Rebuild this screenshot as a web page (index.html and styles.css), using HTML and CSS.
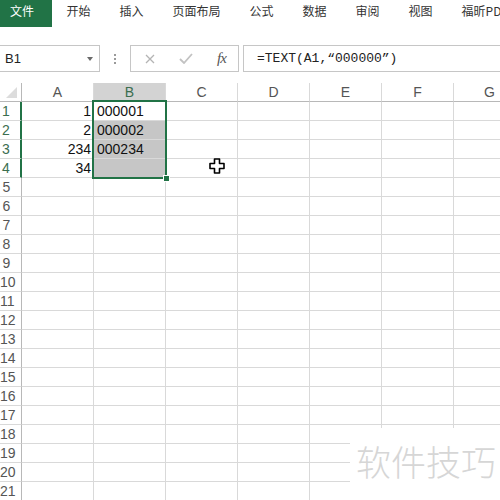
FILE: index.html
```html
<!DOCTYPE html>
<html lang="zh-CN">
<head>
<meta charset="utf-8">
<title>Excel TEXT</title>
<link rel="stylesheet" href="styles.css">
</head>
<body>
<nav class="tabs">
  <span class="tab tab-file">文件</span>
  <span class="tab">开始</span>
  <span class="tab">插入</span>
  <span class="tab">页面布局</span>
  <span class="tab">公式</span>
  <span class="tab">数据</span>
  <span class="tab">审阅</span>
  <span class="tab">视图</span>
  <span class="tab">福昕PDF</span>
</nav>

<div class="fbar">
  <div class="namebox"><span>B1</span><span class="caret"></span></div>
  <div class="dots"><i></i><i></i><i></i></div>
  <div class="fbtns">
    <svg class="ico" width="10" height="10" viewBox="0 0 10 10"><path d="M1 1L9 9M9 1L1 9" stroke="#b4b4b4" stroke-width="1.3" fill="none"/></svg>
    <svg class="ico" width="14" height="11" viewBox="0 0 14 11"><path d="M1 6L5 10L13 1" stroke="#c2c2c2" stroke-width="1.8" fill="none"/></svg>
    <span class="fx">fx</span>
  </div>
  <div class="formula">=TEXT(A1,“000000”)</div>
</div>

<div class="sheet">
  <div class="hrow">
    <div class="corner"><svg width="11" height="11" viewBox="0 0 11 11"><path d="M11 0V11H0Z" fill="#dcdcdc"/></svg></div>
    <div class="ch">A</div><div class="ch ch-sel">B</div><div class="ch">C</div><div class="ch">D</div><div class="ch">E</div><div class="ch">F</div><div class="ch">G</div>
  </div>
  <div class="row"><div class="rh rh-sel">1</div><div class="c num">1</div><div class="c txt">000001</div><div class="c"></div><div class="c"></div><div class="c"></div><div class="c"></div><div class="c"></div></div>
  <div class="row"><div class="rh rh-sel">2</div><div class="c num">2</div><div class="c txt hl">000002</div><div class="c"></div><div class="c"></div><div class="c"></div><div class="c"></div><div class="c"></div></div>
  <div class="row"><div class="rh rh-sel">3</div><div class="c num">234</div><div class="c txt hl">000234</div><div class="c"></div><div class="c"></div><div class="c"></div><div class="c"></div><div class="c"></div></div>
  <div class="row"><div class="rh rh-sel">4</div><div class="c num">34</div><div class="c txt hl"></div><div class="c"></div><div class="c"></div><div class="c"></div><div class="c"></div><div class="c"></div></div>
  <div class="row"><div class="rh">5</div><div class="c"></div><div class="c"></div><div class="c"></div><div class="c"></div><div class="c"></div><div class="c"></div><div class="c"></div></div>
  <div class="row"><div class="rh">6</div><div class="c"></div><div class="c"></div><div class="c"></div><div class="c"></div><div class="c"></div><div class="c"></div><div class="c"></div></div>
  <div class="row"><div class="rh">7</div><div class="c"></div><div class="c"></div><div class="c"></div><div class="c"></div><div class="c"></div><div class="c"></div><div class="c"></div></div>
  <div class="row"><div class="rh">8</div><div class="c"></div><div class="c"></div><div class="c"></div><div class="c"></div><div class="c"></div><div class="c"></div><div class="c"></div></div>
  <div class="row"><div class="rh">9</div><div class="c"></div><div class="c"></div><div class="c"></div><div class="c"></div><div class="c"></div><div class="c"></div><div class="c"></div></div>
  <div class="row"><div class="rh">10</div><div class="c"></div><div class="c"></div><div class="c"></div><div class="c"></div><div class="c"></div><div class="c"></div><div class="c"></div></div>
  <div class="row"><div class="rh">11</div><div class="c"></div><div class="c"></div><div class="c"></div><div class="c"></div><div class="c"></div><div class="c"></div><div class="c"></div></div>
  <div class="row"><div class="rh">12</div><div class="c"></div><div class="c"></div><div class="c"></div><div class="c"></div><div class="c"></div><div class="c"></div><div class="c"></div></div>
  <div class="row"><div class="rh">13</div><div class="c"></div><div class="c"></div><div class="c"></div><div class="c"></div><div class="c"></div><div class="c"></div><div class="c"></div></div>
  <div class="row"><div class="rh">14</div><div class="c"></div><div class="c"></div><div class="c"></div><div class="c"></div><div class="c"></div><div class="c"></div><div class="c"></div></div>
  <div class="row"><div class="rh">15</div><div class="c"></div><div class="c"></div><div class="c"></div><div class="c"></div><div class="c"></div><div class="c"></div><div class="c"></div></div>
  <div class="row"><div class="rh">16</div><div class="c"></div><div class="c"></div><div class="c"></div><div class="c"></div><div class="c"></div><div class="c"></div><div class="c"></div></div>
  <div class="row"><div class="rh">17</div><div class="c"></div><div class="c"></div><div class="c"></div><div class="c"></div><div class="c"></div><div class="c"></div><div class="c"></div></div>
  <div class="row"><div class="rh">18</div><div class="c"></div><div class="c"></div><div class="c"></div><div class="c"></div><div class="c"></div><div class="c"></div><div class="c"></div></div>
  <div class="row"><div class="rh">19</div><div class="c"></div><div class="c"></div><div class="c"></div><div class="c"></div><div class="c"></div><div class="c"></div><div class="c"></div></div>
  <div class="row"><div class="rh">20</div><div class="c"></div><div class="c"></div><div class="c"></div><div class="c"></div><div class="c"></div><div class="c"></div><div class="c"></div></div>
  <div class="row"><div class="rh">21</div><div class="c"></div><div class="c"></div><div class="c"></div><div class="c"></div><div class="c"></div><div class="c"></div><div class="c"></div></div>

  <div class="selection"><span class="handle"></span></div>
</div>

<svg class="cursor" width="16" height="16" viewBox="0 0 16 16"><path d="M5.5 1H10.5V5.5H15V10.5H10.5V15H5.5V10.5H1V5.5H5.5Z" fill="#fff" stroke="#000" stroke-width="1.6" stroke-linejoin="round"/></svg>

<div class="watermark">软件技巧</div>
</body>
</html>
```

FILE: styles.css
```css
html, body {
  margin: 0;
  padding: 0;
}
body {
  width: 500px;
  height: 500px;
  overflow: hidden;
  background: #fff;
  position: relative;
  font-family: "Liberation Sans", Arial, sans-serif;
}

/* ribbon tabs */
.tabs {
  display: flex;
  height: 27px;
  overflow: hidden;
  font-family: "Noto Sans CJK SC", "Noto Sans", sans-serif;
  font-size: 12px;
  color: #333;
  white-space: nowrap;
}
.tab {
  flex-shrink: 0;
  padding: 0 14.5px;
  line-height: 21px;
}
.tab-file {
  width: 52px;
  box-sizing: border-box;
  padding: 0 0 0 10px;
  background: #217346;
  color: #fff;
}

/* formula bar */
.fbar {
  display: flex;
  height: 27px;
  margin-top: 18px;
}
.namebox {
  width: 100px;
  box-sizing: border-box;
  border: 1px solid #c6c6c6;
  border-left: none;
  display: flex;
  align-items: center;
  justify-content: space-between;
  padding: 0 6px 0 5px;
  font-size: 13px;
  color: #222;
}
.caret {
  width: 0;
  height: 0;
  border-left: 3.5px solid transparent;
  border-right: 3.5px solid transparent;
  border-top: 4px solid #6a6a6a;
}
.dots {
  width: 30px;
  display: flex;
  flex-direction: column;
  align-items: center;
  justify-content: center;
  gap: 2px;
}
.dots i {
  width: 2px;
  height: 2px;
  background: #9a9a9a;
}
.fbtns {
  width: 109px;
  box-sizing: border-box;
  border: 1px solid #c6c6c6;
  display: flex;
  align-items: center;
  padding-left: 14px;
}
.fbtns .ico:first-child {
  margin-right: 24px;
}
.fbtns .ico:nth-child(2) {
  margin-right: 24px;
}
.fx {
  font-family: "Liberation Serif", serif;
  font-style: italic;
  font-size: 15px;
  color: #555;
  letter-spacing: -1px;
}
.formula {
  flex: 1;
  margin-left: 4px;
  box-sizing: border-box;
  border: 1px solid #c6c6c6;
  border-right: none;
  padding-left: 13px;
  font-family: "Liberation Mono", monospace;
  font-size: 13px;
  line-height: 25px;
  color: #222;
  white-space: nowrap;
}

/* sheet grid */
.sheet {
  position: relative;
  margin-top: 11px;
  overflow: hidden;
}
.hrow, .row {
  display: grid;
  grid-template-columns: 22px repeat(7, 72px);
}
.hrow {
  height: 19px;
}
.row {
  height: 19px;
}
.hrow > div, .row > div {
  box-sizing: border-box;
  border-right: 1px solid #d9d9d9;
  border-bottom: 1px solid #d9d9d9;
}
.hrow > div {
  border-bottom-color: #b8b8b8;
}
.corner {
  display: flex;
  align-items: flex-end;
  justify-content: flex-end;
  padding: 0 4px 3px 0;
  border-right-color: #b8b8b8 !important;
}
.ch {
  text-align: center;
  font-size: 14px;
  line-height: 18px;
  color: #555;
}
.ch-sel {
  background: #d3d3d3;
  color: #3b6e4f;
}
.rh {
  text-align: center;
  padding-right: 8px;
  font-size: 14px;
  line-height: 18px;
  color: #555;
  border-right-color: #b8b8b8 !important;
  white-space: nowrap;
}
.rh-sel {
  color: #3b6e4f;
  border-right: 2px solid #217346 !important;
}
.c {
  font-size: 14px;
  line-height: 18px;
  color: #111;
  white-space: nowrap;
}
.num {
  text-align: right;
  padding-right: 2px;
}
.txt {
  padding-left: 3px;
}
.hl {
  background: #c6c6c6;
}

/* selection outline (overlay) */
.selection {
  position: absolute;
  left: 92px;
  top: 17px;
  width: 75px;
  height: 79px;
  box-sizing: border-box;
  border: 2px solid #217346;
}
.handle {
  position: absolute;
  right: -5px;
  bottom: -5px;
  width: 5px;
  height: 5px;
  background: #217346;
  border: 1px solid #fff;
}

/* mouse cursor (overlay) */
.cursor {
  position: absolute;
  left: 209px;
  top: 158px;
}

/* watermark (overlay) */
.watermark {
  position: absolute;
  left: 350px;
  top: 428px;
  width: 150px;
  height: 72px;
  background: #fff;
  box-sizing: border-box;
  padding: 13px 0 0 6px;
  font-family: "Noto Sans CJK SC", sans-serif;
  font-weight: 300;
  font-size: 35px;
  line-height: 40px;
  color: #d6d6d6;
  white-space: nowrap;
}
```
